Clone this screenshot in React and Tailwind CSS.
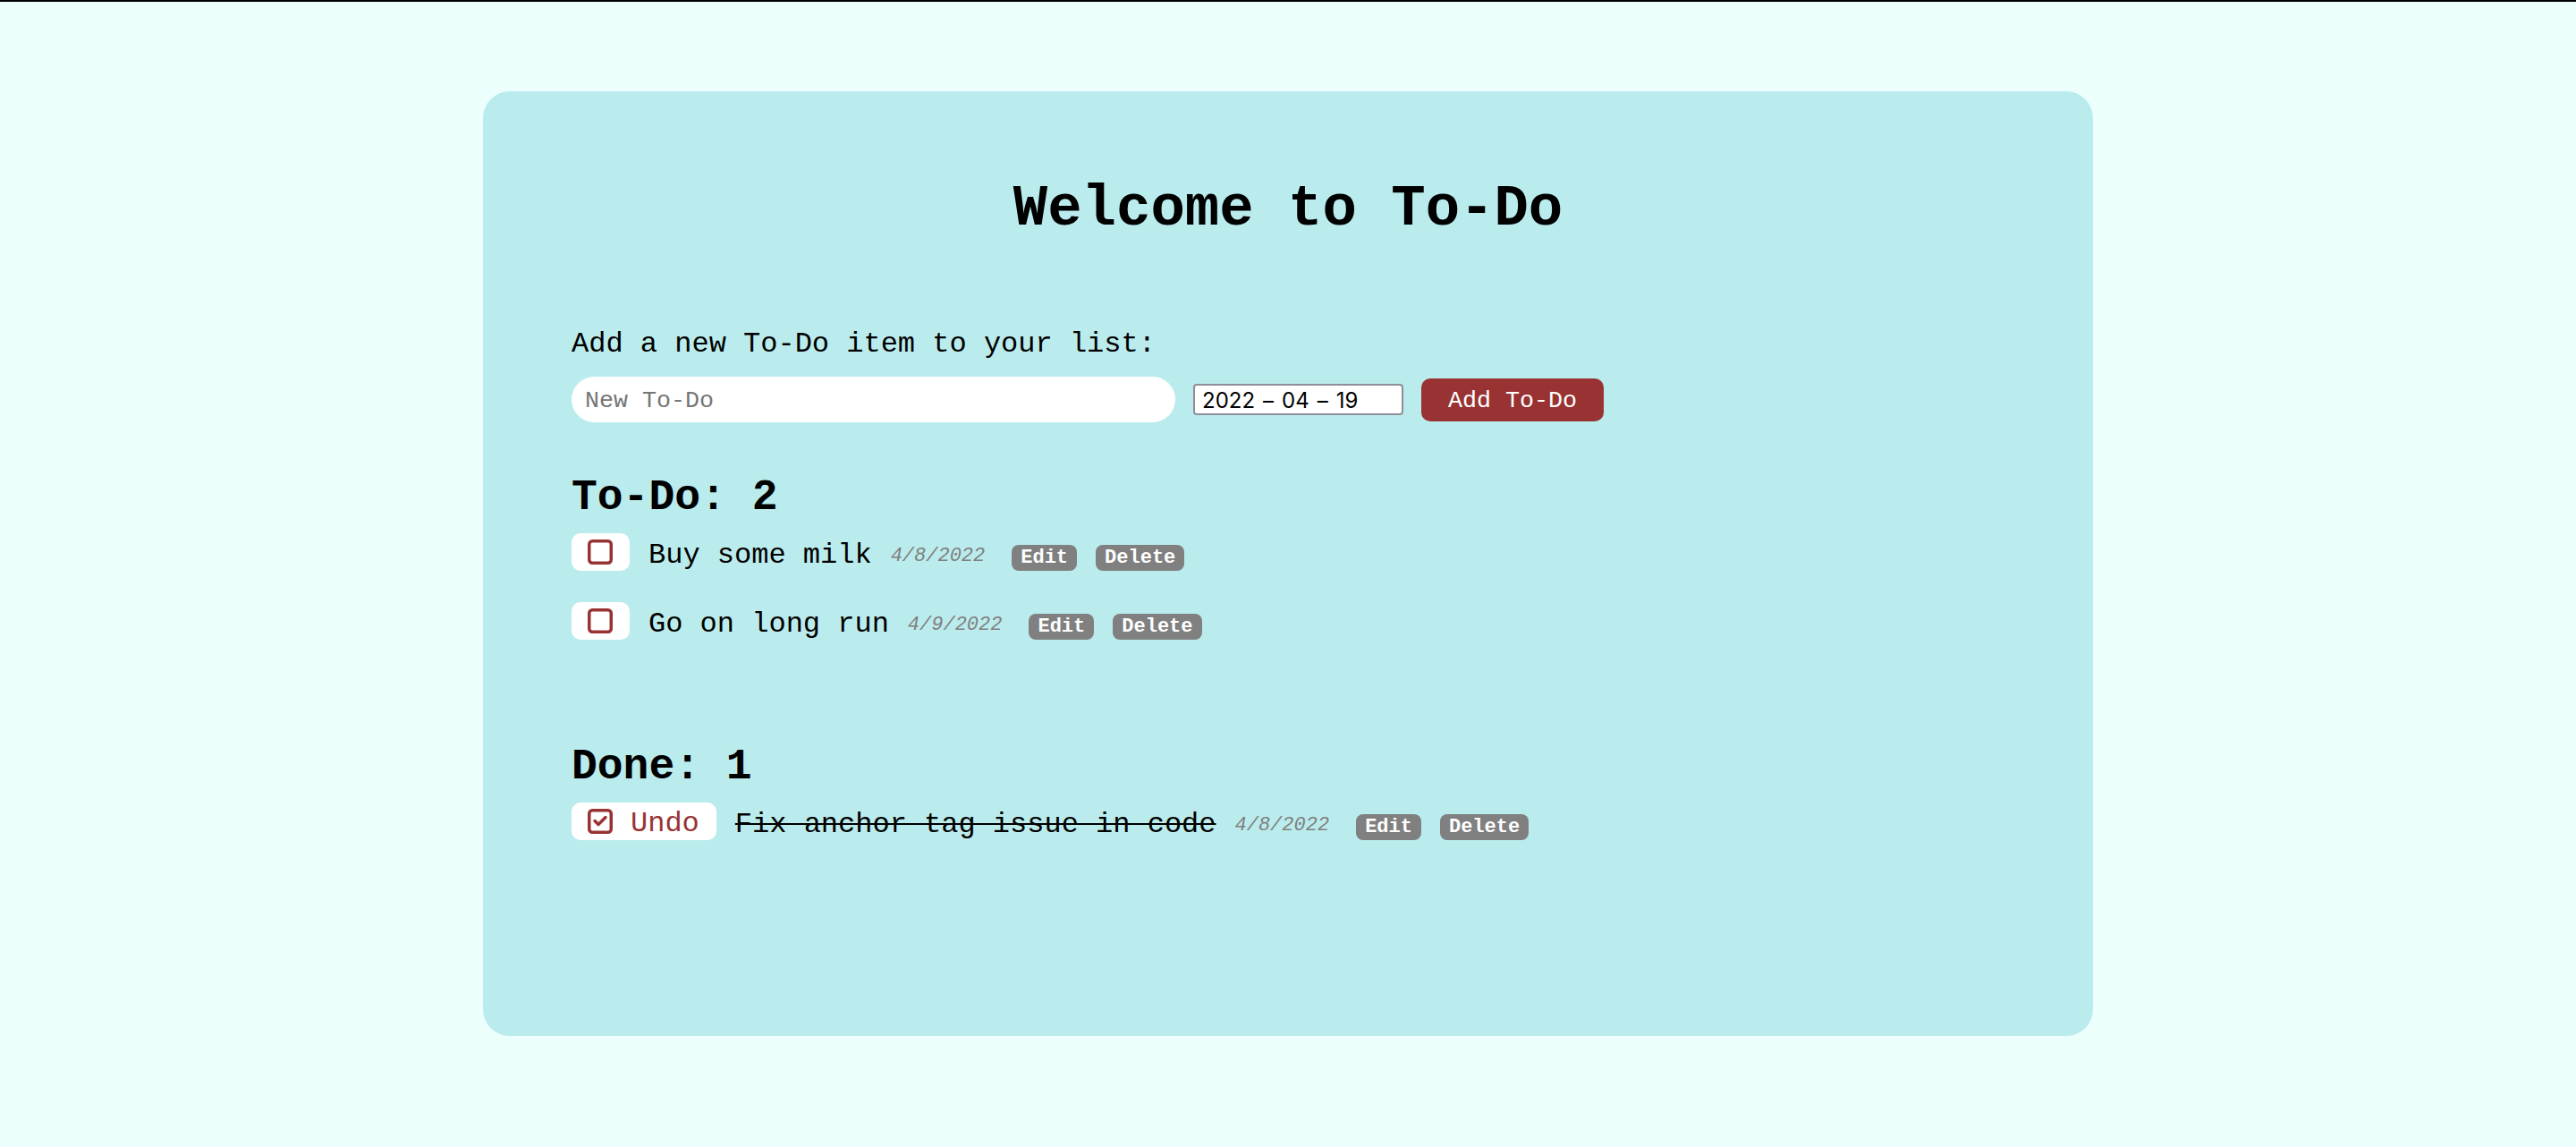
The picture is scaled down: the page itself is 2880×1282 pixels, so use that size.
import { useState } from 'react';

const todos = [
  { id: 1, text: 'Buy some milk', date: '4/8/2022', done: false },
  { id: 2, text: 'Go on long run', date: '4/9/2022', done: false },
  { id: 3, text: 'Fix anchor tag issue in code', date: '4/8/2022', done: true },
];

// outlined square, optionally with a check inside
const CheckBox = ({ checked }) => (
  <svg width="28" height="28" viewBox="0 0 28 28" fill="none" className="shrink-0">
    <rect x="1.75" y="1.75" width="24.5" height="24.5" rx="3.5" stroke="#993333" strokeWidth="3.5" />
    {checked && (
      <path d="M8 13.5l4 4 8-8" stroke="#993333" strokeWidth="3.5" strokeLinecap="round" strokeLinejoin="round" />
    )}
  </svg>
);

const TodoRow = ({ item }) => (
  <div className="flex items-center h-[42px]">
    <button className="flex items-center h-[42px] bg-white rounded-[10px] pl-[18px] pr-[19px] gap-[20px]">
      <CheckBox checked={item.done} />
      {item.done && <span className="mt-[6px] text-[32px] leading-none text-[#993333]">Undo</span>}
    </button>
    <span
      className={`ml-[21px] mt-[7px] text-[32px] leading-none text-black ${
        item.done ? 'line-through decoration-2' : ''
      }`}
    >
      {item.text}
    </span>
    <span className="ml-[21px] mt-[10px] text-[22px] italic leading-none text-[#808080]">{item.date}</span>
    <button className="ml-[30px] mt-[13px] h-[29px] px-[10px] rounded-[8px] bg-[#808080] text-white text-[22px] font-bold leading-none">
      Edit
    </button>
    <button className="ml-[21px] mt-[13px] h-[29px] px-[10px] rounded-[8px] bg-[#808080] text-white text-[22px] font-bold leading-none">
      Delete
    </button>
  </div>
);

export default function App() {
  const [newTodo, setNewTodo] = useState('');
  const open = todos.filter((t) => !t.done);
  const done = todos.filter((t) => t.done);

  return (
    <div className="min-h-screen bg-[#ecfffd] font-['Liberation_Mono','Courier_New',monospace] text-black">
      <div className="h-[2px] bg-black" />
      <div className="mx-auto mt-[100px] w-[1800px] h-[1056px] rounded-[30px] bg-[#bbeced] px-[99px] pt-[96px]">
        <h1 className="text-center text-[64px] font-bold leading-[72px]">Welcome to To-Do</h1>

        <p className="mt-[95px] text-[32px] leading-[40px]">Add a new To-Do item to your list:</p>
        <div className="mt-[16px] flex items-center gap-[20px] h-[51px]">
          <input
            type="text"
            value={newTodo}
            onChange={(e) => setNewTodo(e.target.value)}
            placeholder="New To-Do"
            className="w-[675px] h-[51px] rounded-full bg-white pl-[15px] pt-[3px] text-[26.67px] outline-none placeholder:text-[#767676]"
          />
          <div className="w-[235px] h-[35px] flex items-center gap-[9px] border-2 border-[#8e8e99] rounded-[4px] bg-white pl-[8px] pt-[2px] font-['Inter','Liberation_Sans',sans-serif] text-[24px] leading-none">
            <span>2022</span>
            <span>–</span>
            <span>04</span>
            <span>–</span>
            <span>19</span>
          </div>
          <button className="w-[204px] h-[48px] rounded-[10px] bg-[#993333] pt-[4px] text-white text-[26.67px] leading-none">
            Add To-Do
          </button>
        </div>

        <h2 className="mt-[56px] text-[48px] font-bold leading-[56px]">To-Do: {open.length}</h2>
        <div className="mt-[12px] flex flex-col gap-[35px]">
          {open.map((item) => (
            <TodoRow key={item.id} item={item} />
          ))}
        </div>

        <h2 className="mt-[114px] text-[48px] font-bold leading-[56px]">Done: {done.length}</h2>
        <div className="mt-[12px] flex flex-col gap-[35px]">
          {done.map((item) => (
            <TodoRow key={item.id} item={item} />
          ))}
        </div>
      </div>
    </div>
  );
}
